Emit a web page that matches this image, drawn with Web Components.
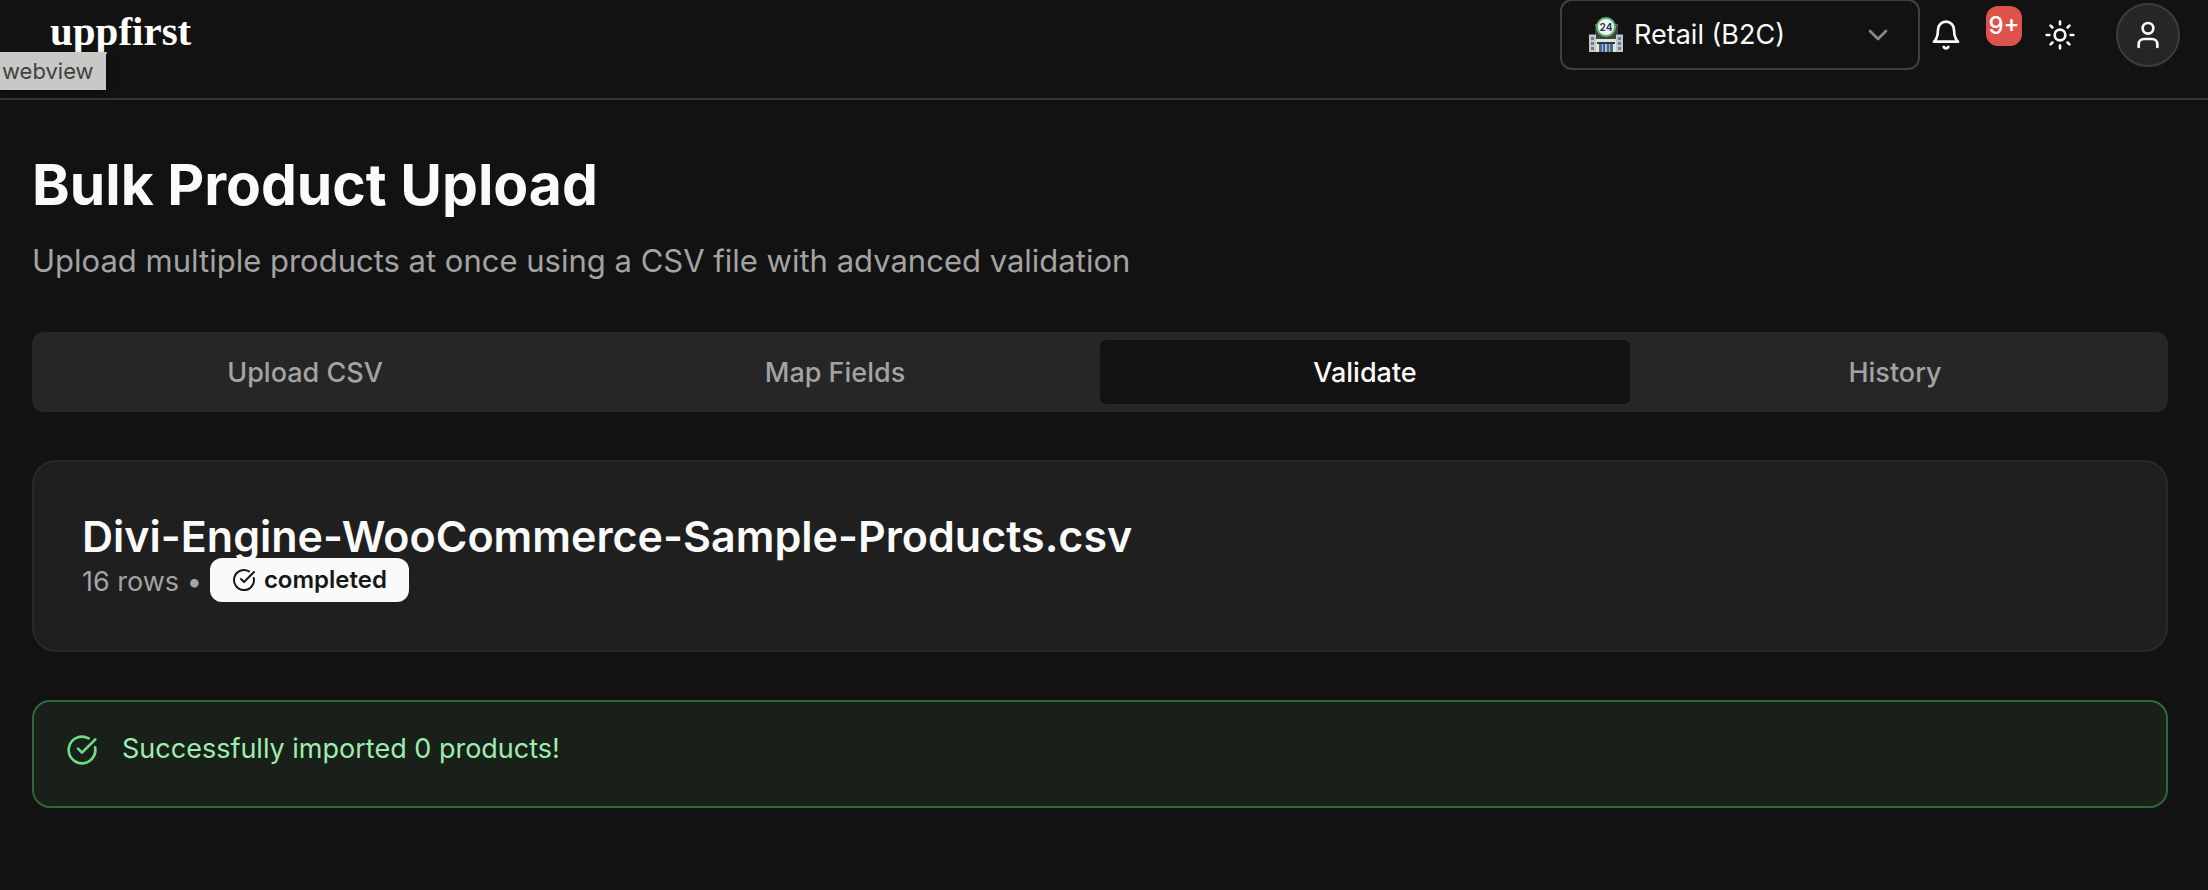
<!DOCTYPE html>
<html lang="en">
<head>
<meta charset="utf-8">
<title>Bulk Product Upload</title>
<style>
  html { background: #121212; }
  body { margin: 0; background: #121212; color: #fafafa; font-family: Inter, "Liberation Sans", sans-serif; }
</style>
</head>
<body>
<app-header>
  <store-picker slot="picker"></store-picker>
</app-header>
<upload-page>
  <step-tabs active="2"></step-tabs>
  <file-card rows="16">
    Divi-Engine-WooCommerce-Sample-Products.csv
    <status-badge slot="status">completed</status-badge>
  </file-card>
  <success-alert>Successfully imported 0 products!</success-alert>
</upload-page>
<hover-tip>webview</hover-tip>

<script>
function define(name, markup) {
  customElements.define(name, class extends HTMLElement {
    connectedCallback() {
      if (this.shadowRoot) return;
      const root = this.attachShadow({ mode: 'open' });
      root.innerHTML = typeof markup === 'function' ? markup(this) : markup;
    }
  });
}

const icon = (size, paths, stroke = 2) =>
  `<svg width="${size}" height="${size}" viewBox="0 0 24 24" fill="none" stroke="currentColor" stroke-width="${stroke}" stroke-linecap="round" stroke-linejoin="round" aria-hidden="true">${paths}</svg>`;

const checkPaths = '<path d="M21.8 10A10 10 0 1 1 17 3.34"/><path d="m9 11 3 3L22 4"/>';

define('app-header', `
  <style>
    :host { display: block; }
    header { display: flex; align-items: center; margin-top: -1px; padding: 0 28px 28px 50px; border-bottom: 2px solid #333; }
    .logo { align-self: flex-start; color: #fff; font: bold 41px/64px "Liberation Serif", serif; text-decoration: none; }
    nav { display: flex; align-items: center; margin-left: auto; }
    button { display: block; padding: 0; border: 0; background: none; color: #fafafa; font: inherit; cursor: pointer; }
    svg { display: block; }
    .bell { position: relative; margin: 0 82px 0 10px; }
    .count { position: absolute; left: 56px; top: -13px; width: 36px; border-radius: 12px; background: #de524c; color: #fff; font-size: 24px; font-weight: 500; line-height: 40px; text-align: center; }
    .user { display: grid; place-items: center; box-sizing: border-box; width: 64px; height: 64px; margin-left: 40px; border: 2px solid #3d3d3d; border-radius: 50%; background: #262626; }
  </style>
  <header>
    <a class="logo" href="#">uppfirst</a>
    <nav aria-label="Account">
      <slot name="picker"></slot>
      <button class="bell" aria-label="Notifications">
        ${icon(32, '<path d="M6 8a6 6 0 0 1 12 0c0 7 3 9 3 9H3s3-2 3-9"/><path d="M10.3 21a1.94 1.94 0 0 0 3.4 0"/>')}
        <span class="count">9+</span>
      </button>
      <button aria-label="Theme">
        ${icon(32, '<circle cx="12" cy="12" r="4"/><path d="M12 2v2M12 20v2M4.93 4.93l1.41 1.41M17.66 17.66l1.41 1.41M2 12h2M20 12h2M6.34 17.66l-1.41 1.41M19.07 4.93l-1.41 1.41"/>')}
      </button>
      <button class="user" aria-label="Profile">
        ${icon(32, '<path d="M19 21v-2a4 4 0 0 0-4-4H9a4 4 0 0 0-4 4v2"/><circle cx="12" cy="7" r="4"/>')}
      </button>
    </nav>
  </header>`);

define('store-picker', `
  <style>
    :host { display: block; }
    label { display: flex; align-items: center; box-sizing: border-box; width: 360px; height: 71px; padding: 0 24px 0 26px; border: 2px solid #404040; border-radius: 12px; }
    svg { display: block; flex: none; pointer-events: none; }
    select { flex: 1; min-width: 0; height: 64px; margin: 0 0 0 10px; padding: 0; border: 0; outline: 0; appearance: none; background: #121212; color: #fafafa; font: 400 27px Inter, sans-serif; }
    .chevron { color: #8a8a8a; }
  </style>
  <label>
    <svg width="36" height="36" viewBox="0 0 36 36" aria-hidden="true">
      <path d="M7 7h23v15H7z" fill="#37483f"/>
      <path d="M7 7h4v2H7zM26 7h4v2h-4z" fill="#59635f"/>
      <path d="M1 17h7v18H1zM28 17h7v18h-7z" fill="#c9c6ba"/>
      <path d="M1 17h7v1H1zM28 17h7v1h-7z" fill="#6b6a8c"/>
      <path d="M3 20h3v3H3zM3 25h3v3H3zM3 30h3v3H3zM30 20h3v3h-3zM30 25h3v3h-3zM30 30h3v3h-3z" fill="#4d88b5"/>
      <path d="M8 22h20v13H8z" fill="#e6e4d9"/>
      <path d="M9 25h18v2H9z" fill="#30345c"/>
      <path d="M11 27h14v8H11z" fill="#42698c"/>
      <path d="M14 27h1v8h-1zM17 27h2v8h-2zM21 27h1v8h-1z" fill="#a5bccb"/>
      <circle cx="18" cy="10" r="9" fill="#f4f6f4" stroke="#5cb270" stroke-width="2"/>
      <text x="18" y="14" text-anchor="middle" font-family="Inter, sans-serif" font-size="10" font-weight="700" fill="#30365a">24</text>
    </svg>
    <select aria-label="Store type"><option>Retail (B2C)</option><option>Wholesale (B2B)</option></select>
    <span class="chevron">${icon(32, '<path d="m6 9 6 6 6-6"/>')}</span>
  </label>`);

define('upload-page', `
  <style>
    :host { display: block; }
    main { display: flex; flex-direction: column; gap: 48px; padding: 48px 40px 48px 32px; }
    h1 { margin: 0 0 16px; font-size: 57px; font-weight: 700; line-height: 74px; }
    p { margin: 0; color: #a3a3a3; font-size: 31px; line-height: 46px; }
  </style>
  <main>
    <div>
      <h1>Bulk Product Upload</h1>
      <p>Upload multiple products at once using a CSV file with advanced validation</p>
    </div>
    <slot></slot>
  </main>`);

define('step-tabs', host => `
  <style>
    :host { display: block; }
    div { display: grid; grid-template-columns: repeat(4, 1fr); padding: 8px; border-radius: 12px; background: #262626; }
    button { height: 64px; padding: 0; border: 0; border-radius: 6px; background: none; color: #a3a3a3; font: 500 27px Inter, sans-serif; cursor: pointer; }
    button[aria-selected="true"] { background: #121212; color: #fafafa; }
  </style>
  <div role="tablist">
    ${['Upload CSV', 'Map Fields', 'Validate', 'History'].map((t, i) =>
      `<button role="tab" aria-selected="${i === +host.getAttribute('active')}">${t}</button>`).join('')}
  </div>`);

define('file-card', host => `
  <style>
    :host { display: block; }
    section { padding: 48px; border: 2px solid #292929; border-radius: 24px; background: #1f1f1f; }
    h2 { margin: 0; font-size: 43px; font-weight: 600; line-height: 52px; }
    .meta { display: flex; align-items: flex-end; gap: 8px; margin-top: -4px; color: #a3a3a3; font-size: 27px; line-height: 40px; }
  </style>
  <section>
    <h2><slot></slot></h2>
    <div class="meta"><span>${host.getAttribute('rows')} rows •</span><slot name="status"></slot></div>
  </section>`);

define('status-badge', `
  <style>
    :host { display: flex; align-items: center; gap: 8px; height: 44px; padding: 0 22px; border-radius: 12px; background: #fafafa; color: #171717; font-size: 24px; font-weight: 600; position: relative; }
  </style>
  ${icon(24, checkPaths)}<span><slot></slot></span>`);

define('success-alert', `
  <style>
    :host { display: block; }
    div { display: flex; gap: 24px; padding: 32px 32px 40px; border: 2px solid #2f663a; border-radius: 18px; background: #182019; color: #9fecb2; font-size: 27px; line-height: 30px; }
    svg { flex: none; color: #70db85; }
  </style>
  <div role="status">${icon(32, checkPaths)}<span><slot></slot></span></div>`);

define('hover-tip', `
  <style>
    :host { position: absolute; left: 0; top: 52px; box-sizing: border-box; width: 106px; padding-left: 2px; background: #c8c8c6; color: #40403e; font-size: 22px; line-height: 38px; box-shadow: 0 2px 6px #0006; }
  </style>
  <slot></slot>`);
</script>
</body>
</html>
